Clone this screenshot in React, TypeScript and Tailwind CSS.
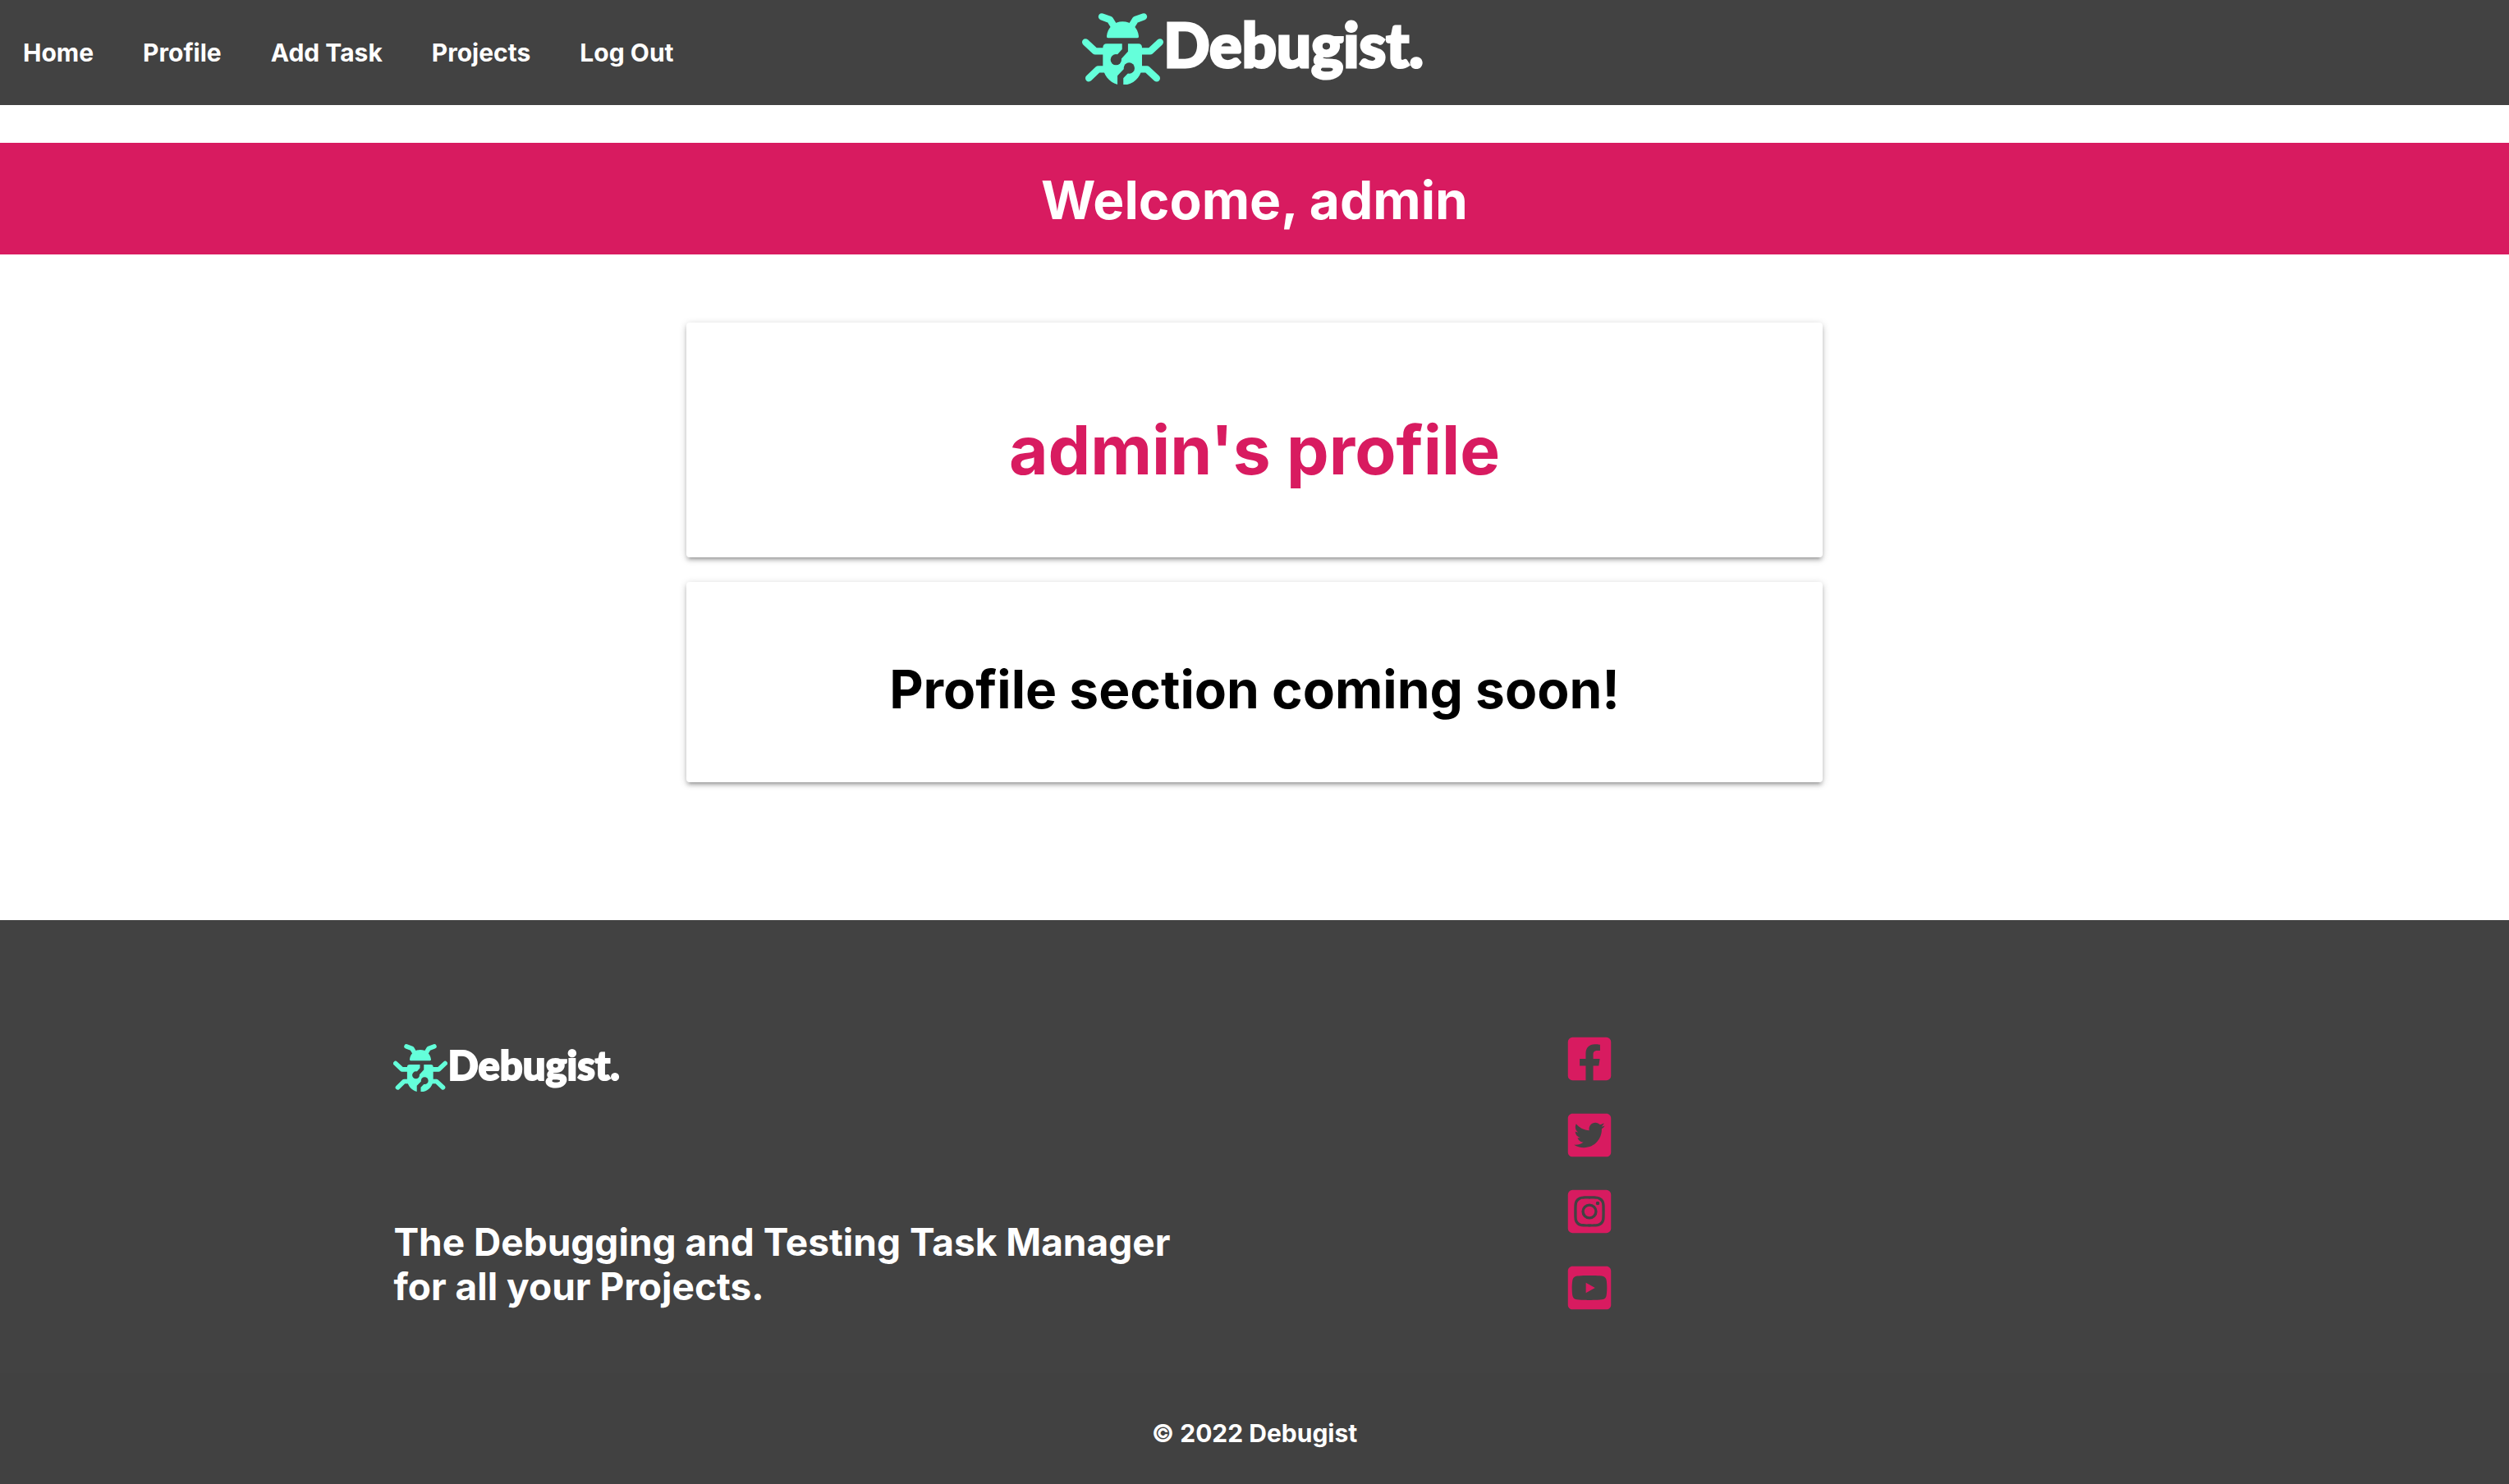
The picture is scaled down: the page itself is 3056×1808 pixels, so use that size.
import React from "react";
import { FaFacebookSquare, FaInstagramSquare, FaTwitterSquare, FaYoutubeSquare } from "react-icons/fa";

const navLinks = ["Home", "Profile", "Add Task", "Projects", "Log Out"];

const socialLinks = [
  { name: "Facebook", Icon: FaFacebookSquare },
  { name: "Twitter", Icon: FaTwitterSquare },
  { name: "Instagram", Icon: FaInstagramSquare },
  { name: "YouTube", Icon: FaYoutubeSquare },
];

function BugIcon({ className }: { className: string }) {
  return (
    <svg viewBox="57 47 297 261" className={className} aria-hidden="true" fill="none">
      <g stroke="#64ffda" strokeWidth="25" strokeLinecap="round" strokeLinejoin="round">
        <path d="M129 60 L159 71 L172 92" />
        <path d="M282 60 L252 71 L239 92" />
        <path d="M69.500 153 L105 186 H142" />
        <path d="M341.500 153 L306 186 H268" />
        <path d="M81.500 285 L116 252 H142" />
        <path d="M329.500 285 L294 252 H268" />
      </g>
      <path
        fill="#64ffda"
        d="M152 138 Q146 138 147 131 C150 100 175 78 205 78 C236 78 261 100 264 131 Q265 138 259 138 Z"
      />
      <path
        fill="#64ffda"
        d="M147 159 H263 Q276 159 276 173 V240 C276 272 254 301 222 308 H187 C157 301 133 272 133 240 V173 Q133 159 147 159 Z"
      />
      <g stroke="#424242" strokeWidth="21.500">
        <path d="M214 156 V183 L186 214" />
        <path d="M224 252 L197 280 V310" />
      </g>
      <circle cx="181" cy="217" r="20" fill="#424242" />
      <circle cx="229" cy="248" r="20" fill="#424242" />
    </svg>
  );
}

export default function App() {
  return (
    <div className="flex min-h-screen flex-col bg-white font-[Inter,sans-serif] font-bold">
      <header className="grid h-32 grid-cols-[1fr_auto_1fr] bg-[#424242] text-white">
        <nav className="flex items-center">
          {navLinks.map((label) => (
            <a key={label} href="#" className="px-[30px] text-[30px] leading-[128px] whitespace-nowrap first:pl-7">
              {label}
            </a>
          ))}
        </nav>
        <a href="#" className="flex items-start pt-4 pr-1 font-[Lato,sans-serif] font-black">
          <BugIcon className="h-[87px] w-[99px]" />
          <span className="text-[74px] leading-[76px] [-webkit-text-stroke:3px_white]">Debugist.</span>
        </a>
      </header>

      <main className="flex flex-col">
        <h1 className="mt-[46px] bg-[#d81b60] pt-[33px] pb-[29px] text-center text-[64px] leading-[74px] text-white">
          Welcome, admin
        </h1>
        <div className="mx-auto mt-[83px] mb-[168px] flex w-[70%] justify-center">
          <div className="flex w-2/3 flex-col gap-[30px] px-[21px] text-center">
            <section className="rounded-[4px] bg-white pt-[108px] pb-[82px] shadow-[0_4px_4px_rgba(0,0,0,0.14),0_6px_2px_-4px_rgba(0,0,0,0.12),0_2px_10px_rgba(0,0,0,0.2)]">
              <h2 className="text-[82px] leading-[96px] text-[#d81b60]">admin's profile</h2>
            </section>
            <section className="rounded-[4px] bg-white pt-[94px] pb-[76px] shadow-[0_4px_4px_rgba(0,0,0,0.14),0_6px_2px_-4px_rgba(0,0,0,0.12),0_2px_10px_rgba(0,0,0,0.2)]">
              <h3 className="text-[64px] leading-[74px] text-black">Profile section coming soon!</h3>
            </section>
          </div>
        </div>
      </main>

      <footer className="flex grow flex-col bg-[#424242] text-white">
        <div className="mx-auto flex w-[70%] pt-[139px] pb-[74px]">
          <div className="w-2/3 px-[21px] pt-3">
            <a href="#" className="inline-flex items-start font-[Lato,sans-serif] font-black">
              <BugIcon className="h-[58px] w-[66px]" />
              <span className="text-[49px] leading-[50px] [-webkit-text-stroke:2px_white]">Debugist.</span>
            </a>
            <h4 className="mt-[150px] text-[46px] leading-[54px]">
              The Debugging and Testing Task Manager
              <br />
              for all your Projects.
            </h4>
          </div>
          <ul className="flex w-1/3 flex-col gap-[33px] px-[21px] text-[60px] text-[#d81b60]">
            {socialLinks.map(({ name, Icon }) => (
              <li key={name}>
                <a href="#" aria-label={name} className="block w-[60px]">
                  <Icon className="block" />
                </a>
              </li>
            ))}
          </ul>
        </div>
        <div className="grow bg-[#414141] pt-[53px] pb-[40px] text-center text-[30px] leading-10">
          © 2022 Debugist
        </div>
      </footer>
    </div>
  );
}
